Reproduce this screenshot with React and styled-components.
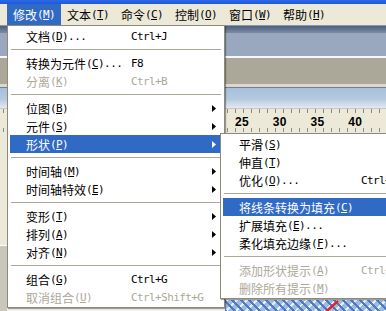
import React from 'react';
import styled, { createGlobalStyle, css } from 'styled-components';

// FLASH "修改" MENU, XP STYLE

const GlobalStyle = createGlobalStyle`
  html, body {
    margin: 0;
    padding: 0;
    overflow: hidden;
    background: #ece9d8;
  }
  body {
    font-family: "Noto Sans CJK SC", "Noto Sans", sans-serif;
    font-size: 12px;
  }
`;

const Screen = styled.div`
  position: relative;
  width: 386px;
  height: 311px;
  overflow: hidden;
  display: flex;
  flex-direction: column;
  background: #ece9d8;
  color: #000;
`;

const TitleEdge = styled.div`
  flex-shrink: 0;
  height: 4px;
  background: linear-gradient(#2b69e8, #1d5adb);
`;

const MenuBar = styled.div`
  flex-shrink: 0;
  height: 21px;
  display: flex;
  padding-left: 7px;
  background: #ece9d8;
`;

const BarItem = styled.div`
  width: 54px;
  box-sizing: border-box;
  padding: 0 6px;
  display: flex;
  align-items: center;
  white-space: nowrap;
  ${p => p.$active && css`
    background: #316ac5;
    color: #fff;
  `}
`;

const Lat = styled.span`
  font-family: "DejaVu Sans Mono", "Liberation Mono", monospace;
  font-size: 11px;
  letter-spacing: -0.6px;
`;

// workspace bands behind the menus

const Workspace = styled.div`
  flex: 1;
  display: flex;
  flex-direction: column;
`;

const DockEdge = styled.div`
  height: 1px;
  background: #8b97a8;
`;

const DockHeader = styled.div`
  height: 7px;
  background: linear-gradient(#4d5f7e, #7c8ca7);
`;

const PanelBar = styled.div`
  height: 23px;
  background: #9aa8bf;
`;

const WhiteRule = styled.div`
  height: 2px;
  background: #f6f7f9;
`;

const ToolStrip = styled.div`
  height: 26px;
  background: #aca899;
`;

const LightRule = styled.div`
  height: 3px;
  background: #dcd9cc;
  border-bottom: 1px solid #6f7f97;
`;

const TimelineHead = styled.div`
  height: 20px;
  background: linear-gradient(#a7c1db 0%, #b3c9df 55%, #e4e9f2 100%);
  border-bottom: 1px solid #c9c7bc;
`;

const Ruler = styled.div`
  height: 24px;
  display: flex;
  align-items: center;
  padding-left: 235px;
  background-color: #ece9d8;
  background-image:
    repeating-linear-gradient(to right, #8a8a8a 0 1px, transparent 1px 8px),
    repeating-linear-gradient(to right, #8a8a8a 0 1px, transparent 1px 8px);
  background-size: 100% 4px, 100% 4px;
  background-position: 3px 0, 3px 19px;
  background-repeat: no-repeat;
`;

const RulerNum = styled.span`
  width: 40px;
  padding-top: 1px;
  font-family: "Liberation Sans", Arial, sans-serif;
  font-weight: bold;
  font-size: 12px;
  letter-spacing: 0.3px;
`;

const Stage = styled.div`
  flex: 1;
  display: flex;
`;

const SideStrip = styled.div`
  width: 7px;
  display: flex;
  flex-direction: column;
`;

const SideTop = styled.div`
  height: 112px;
  background: #ece9d8;
  border-bottom: 1px solid #fff;
`;

const SideBottom = styled.div`
  flex: 1;
  background: #c9c6bb;
`;

const Canvas = styled.div`
  flex: 1;
  display: flex;
  flex-direction: column;
  background: #f4f3ee;
`;

const CanvasFill = styled.div`
  flex: 1;
`;

const Pattern = styled.div`
  height: 11px;
  margin-left: 218px;
  background-color: #9fbbe0;
  background-image:
    repeating-linear-gradient(45deg, #4d7bc3 0 2px, transparent 2px 6px),
    repeating-linear-gradient(-45deg, #e8f0fa 0 2px, transparent 2px 7px);
  svg {
    display: block;
  }
`;

// menus (overlays)

const Menu = styled.div`
  position: absolute;
  left: ${p => p.$left}px;
  top: ${p => p.$top}px;
  width: ${p => p.$width}px;
  box-sizing: border-box;
  padding: 1px 2px;
  background: #fff;
  border: 1px solid #8d8a7c;
  box-shadow: 1px 1px 1px rgba(0, 0, 0, 0.35);
`;

const Row = styled.div`
  height: 18px;
  display: grid;
  grid-template-columns: ${p => p.$labelWidth}px 1fr 4px;
  align-items: center;
  padding: 0 6px 0 16px;
  white-space: nowrap;
  color: ${p => (p.$disabled ? '#aca899' : p.$active ? '#fff' : '#000')};
  background: ${p => (p.$active ? '#316ac5' : 'transparent')};
`;

const Label = styled.span`
  display: flex;
  align-items: center;
`;

const Sep = styled.div`
  height: 1px;
  margin: 4px 1px;
  background: #aca899;
`;

const Arrow = ({ color }) => (
  <svg width="4" height="7" viewBox="0 0 4 7">
    <polygon points="0,0 4,3.5 0,7" fill={color} />
  </svg>
);

const Mnemonic = ({ k, tail }) => (
  <Lat>
    (<u>{k}</u>){tail}
  </Lat>
);

const barItems = [
  { t: '修改', k: 'M', active: true },
  { t: '文本', k: 'T' },
  { t: '命令', k: 'C' },
  { t: '控制', k: 'O' },
  { t: '窗口', k: 'W' },
  { t: '帮助', k: 'H' },
];

const mainItems = [
  { t: '文档', k: 'D', tail: '...', key: 'Ctrl+J' },
  'sep',
  { t: '转换为元件', k: 'C', tail: '...', key: 'F8' },
  { t: '分离', k: 'K', key: 'Ctrl+B', disabled: true },
  'sep',
  { t: '位图', k: 'B', sub: true },
  { t: '元件', k: 'S', sub: true },
  { t: '形状', k: 'P', sub: true, active: true },
  'sep',
  { t: '时间轴', k: 'M', sub: true },
  { t: '时间轴特效', k: 'E', sub: true },
  'sep',
  { t: '变形', k: 'T', sub: true },
  { t: '排列', k: 'A', sub: true },
  { t: '对齐', k: 'N', sub: true },
  'sep',
  { t: '组合', k: 'G', key: 'Ctrl+G' },
  { t: '取消组合', k: 'U', key: 'Ctrl+Shift+G', disabled: true },
];

const shapeItems = [
  { t: '平滑', k: 'S' },
  { t: '伸直', k: 'T' },
  { t: '优化', k: 'O', tail: '...', key: 'Ctrl+Alt+Shift+C' },
  'sep',
  { t: '将线条转换为填充', k: 'C', active: true },
  { t: '扩展填充', k: 'E', tail: '...' },
  { t: '柔化填充边缘', k: 'F', tail: '...' },
  'sep',
  { t: '添加形状提示', k: 'A', key: 'Ctrl+Shift+H', disabled: true },
  { t: '删除所有提示', k: 'M', disabled: true },
];

const MenuList = ({ items, labelWidth }) =>
  items.map((it, i) => {
    if (it === 'sep') return <Sep key={i} />;
    return (
      <Row key={i} $labelWidth={labelWidth} $active={it.active} $disabled={it.disabled}>
        <Label>
          {it.t}
          <Mnemonic k={it.k} tail={it.tail} />
        </Label>
        <Lat>{it.key}</Lat>
        {it.sub ? <Arrow color={it.active ? '#fff' : '#000'} /> : <span />}
      </Row>
    );
  });

const App = () => (
  <>
    <GlobalStyle />
    <Screen>
      <TitleEdge />
      <MenuBar>
        {barItems.map(b => (
          <BarItem key={b.k} $active={b.active}>
            {b.t}
            <Mnemonic k={b.k} />
          </BarItem>
        ))}
      </MenuBar>
      <Workspace>
        <DockEdge />
        <DockHeader />
        <PanelBar />
        <WhiteRule />
        <ToolStrip />
        <LightRule />
        <TimelineHead />
        <Ruler>
          {[25, 30, 35, 40].map(n => (
            <RulerNum key={n}>{n}</RulerNum>
          ))}
        </Ruler>
        <Stage>
          <SideStrip>
            <SideTop />
            <SideBottom />
          </SideStrip>
          <Canvas>
            <CanvasFill />
            <Pattern>
              <svg width="161" height="11" viewBox="0 0 161 11">
                <line x1="101" y1="11.5" x2="113" y2="1" stroke="#e8202a" strokeWidth="2.5" />
              </svg>
            </Pattern>
          </Canvas>
        </Stage>
      </Workspace>

      <Menu $left={7} $top={25} $width={218}>
        <MenuList items={mainItems} labelWidth={105} />
      </Menu>
      <Menu $left={220} $top={133} $width={260}>
        <MenuList items={shapeItems} labelWidth={122} />
      </Menu>
    </Screen>
  </>
);

export default App;
